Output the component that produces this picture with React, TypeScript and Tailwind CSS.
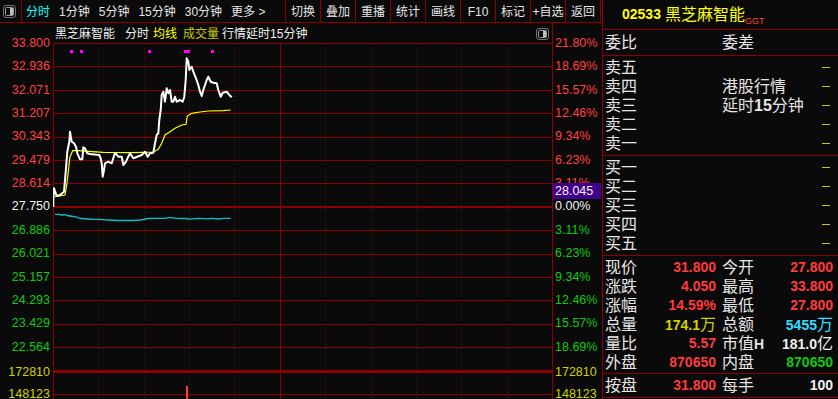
import React from "react";

const F = "font-['Liberation_Sans','Noto_Sans_CJK_SC',sans-serif]";
const LINE = "#8b0000";

function PanelIcon({ w = 13, h = 13 }: { w?: number; h?: number }) {
  return (
    <svg width={w} height={h} viewBox={`0 0 ${w} ${h}`}>
      <rect x="0.5" y="0.5" width={w - 1} height={h - 1} rx="2.5" fill="none" stroke="#707070" />
      <rect x="2.5" y="2.5" width={w - 5} height={h - 5} rx="1" fill="none" stroke="#9a9a9a" />
      <rect x={w - 6} y="3" width="3" height={h - 6} fill="#bdbdbd" />
    </svg>
  );
}

function Toolbar() {
  const tabs = ["1分钟", "5分钟", "15分钟", "30分钟", "更多 >"];
  const btns = ["切换", "叠加", "重播", "统计", "画线", "F10", "标记", "+自选", "返回"];
  return (
    <div className="h-[23px] shrink-0 border-b border-[#8b0000] flex text-[12px] leading-none">
      <div className="w-[22px] border-r border-[#8b0000] flex items-center pl-[3px]">
        <PanelIcon />
      </div>
      <div className="w-[264px] border-r border-[#8b0000] flex items-center pl-[4px] gap-[9px] pt-[2px]">
        <span className="text-[#00ffff]">分时</span>
        {tabs.map((t) => (
          <span key={t} className="text-[#e6e6e6] whitespace-pre">
            {t}
          </span>
        ))}
      </div>
      {btns.map((b) => (
        <div
          key={b}
          className="w-[35px] border-r border-[#8b0000] flex items-center justify-center pt-[2px] text-[#e6e6e6]"
        >
          {b}
        </div>
      ))}
    </div>
  );
}

const prices = [
  "33.800", "32.936", "32.071", "31.207", "30.343", "29.479", "28.614",
  "27.750", "26.886", "26.021", "25.157", "24.293", "23.429", "22.564",
];
const pcts = [
  "21.80%", "18.69%", "15.57%", "12.46%", "9.34%", "6.23%", "3.11%",
  "0.00%", "3.11%", "6.23%", "9.34%", "12.46%", "15.57%", "18.69%",
];

function axisColor(i: number) {
  if (i < 7) return "text-[#ff4040]";
  if (i === 7) return "text-[#f0f0f0]";
  return "text-[#10c810]";
}

function LeftAxis() {
  return (
    <div className="w-[53px] shrink-0 flex flex-col pt-[8.3px] text-[12.5px] leading-none overflow-hidden">
      {prices.map((p, i) => (
        <div key={i} className={`h-[23.4px] shrink-0 flex items-center justify-end pr-[3px] ${axisColor(i)}`}>
          {p}
        </div>
      ))}
      <div className="h-[22px] mt-[2px] shrink-0 flex items-center justify-end pr-[3px] text-[#d2d200]">172810</div>
      <div className="h-[22px] shrink-0 flex items-center justify-end pr-[3px] text-[#d2d200]">148123</div>
    </div>
  );
}

function RightAxis() {
  return (
    <div className="relative w-[50px] shrink-0 border-l border-[#8b0000] flex flex-col pt-[8.3px] text-[12.5px] leading-none overflow-hidden">
      {pcts.map((p, i) => (
        <div key={i} className={`h-[23.4px] shrink-0 flex items-center pl-[2px] ${axisColor(i)}`}>
          {p}
        </div>
      ))}
      <div className="h-[22px] mt-[2px] shrink-0 flex items-center pl-[2px] text-[#d2d200]">172810</div>
      <div className="h-[22px] shrink-0 flex items-center pl-[2px] text-[#d2d200]">148123</div>
      <div className="absolute left-0 top-[160px] w-[48px] h-[16px] bg-[#40008c] text-[#f4f4f4] flex items-center pl-[2px]">
        28.045
      </div>
    </div>
  );
}

function ChartHeader() {
  return (
    <div className="h-[20px] shrink-0 flex items-center text-[12px] leading-none pl-[2px] pt-[1px]">
      <span className="text-[#f0f0f0]">黑芝麻智能</span>
      <span className="text-[#f0f0f0] ml-[10px]">分时</span>
      <span className="text-[#ffff00] ml-[4px]">均线</span>
      <span className="text-[#c8c800] ml-[6px]">成交量</span>
      <span className="text-[#f0f0f0] ml-[3px]">行情延时15分钟</span>
      <span className="ml-auto mr-[3px] flex">
        <PanelIcon w={13} h={12} />
      </span>
    </div>
  );
}

const whitePts =
  "53.3,207 53.3,200 54,188.3 56.7,196 60,195 64,191.7 66,168.3 67.3,151.7 69.3,141.7 70,131.7 71.7,141.7 74,143.3 76,146.7 77.3,153.3 80,159.3 82.3,159.3 83.3,147.3 85,148.3 87.3,153.3 90,154 99.3,155 100.7,158.3 101.7,163.3 102.7,176.7 104,170 105,163.3 108.3,161.7 111.7,163.3 115,152.7 118.3,156.7 121.7,156.7 123.3,165 126,161.7 128.3,156.7 130,153.3 133.3,158.3 137.3,156.7 141.7,155 145,151.7 147.7,156.7 150,153.3 153.3,152.7 155,143.3 156.7,135 158.3,133.3 159.3,120 160.7,110 161.7,95 163.3,91.7 165,101.7 166.7,88.3 168.3,93.3 170,90 171.7,101.7 173.3,101.7 175,96.7 176.7,101.7 180,100 182.7,101.7 184.3,96.7 185.7,80 186.7,58.3 188.3,61.7 189.3,70 191.7,66.7 193.3,71.7 196,78.3 198.3,85 200,91.7 201.7,96 203.3,90 206.7,80 208.3,76.7 210.7,81.7 213.3,82.7 216.7,83.3 218.3,90 220.7,96.7 222.7,92.7 226.7,91.7 229.3,95 231.7,97.3";

const yellowPts =
  "55,196.7 65,195 66.7,185 68.3,171.7 70,156.7 72.7,150.7 78.3,150.7 103.3,152.3 133.3,152.7 153.3,152 158.3,149.3 161.7,143.3 165,135 170,131.7 175,128.3 181.7,125 186,124.3 187.3,116 191.7,113.3 200,112 208.3,111 223.3,110.7 230.7,110";

const cyanPts =
  "55,214.3 60,214.3 61,215 64,215 65,214.5 67,215.5 70,216 73,216.5 75,216.7 78,217.5 80,218.5 83,218.3 86,219 90,219 93,219.3 100,219.3 105,219.8 110,220 116.7,220.5 125,220.3 133.3,220.5 140,220 143.3,219.5 148,218.5 155,218.3 165,218.3 170,217.3 176,218.3 185,218.5 190,219.2 195,218.6 200,218.3 206,218.8 212,218.4 218,219 224,218.4 230.7,218.3";

function Plot() {
  const W = 499;
  const H = 356;
  const hLines: number[] = [];
  for (let k = 1; k <= 13; k++) if (k !== 7) hLines.push(Math.round(k * 23.4) + 0.5);
  const vLines: { x: number; solid: boolean }[] = [];
  for (let i = 1; i <= 10; i++) vLines.push({ x: Math.round(i * 45.36) + 0.5, solid: i === 5 });
  return (
    <svg width={W} height={H} className="block shrink-0">
      <line x1="0.5" y1="0" x2="0.5" y2={H} stroke={LINE} />
      <line x1="0" y1="0.5" x2={W} y2="0.5" stroke={LINE} />
      {hLines.map((y) => (
        <line key={y} x1="0" y1={y} x2={W} y2={y} stroke={LINE} />
      ))}
      <rect x="0" y="163" width={W} height="2" fill={LINE} />
      <rect x="0" y="327" width={W} height="3" fill={LINE} />
      <line x1="0" y1="351.5" x2={W} y2="351.5" stroke={LINE} />
      {vLines.map((v) => (
        <line
          key={v.x}
          x1={v.x}
          y1="1"
          x2={v.x}
          y2={H}
          stroke={LINE}
          strokeDasharray={v.solid ? undefined : "1 3"}
        />
      ))}
      <g transform="translate(-53,-43)">
        <polyline points={cyanPts} fill="none" stroke="#10c0c8" strokeWidth="1.3" />
        <polyline points={yellowPts} fill="none" stroke="#ffff00" strokeWidth="1.2" />
        <polyline points={whitePts} fill="none" stroke="#ffffff" strokeWidth="2" strokeLinejoin="round" />
        {[70, 80, 148, 211].map((x) => (
          <rect key={x} x={x} y="50" width="3" height="3" fill="#ff00ff" />
        ))}
        <rect x="184" y="50" width="6" height="3" fill="#ff00ff" />
        <rect x="186" y="386" width="2" height="13" fill="#ff3c3c" />
      </g>
    </svg>
  );
}

function Dash() {
  return <span className="w-[8px] h-px bg-[#c8c800] mr-[8px]" />;
}

function BookRow({ label, mid }: { label: string; mid?: string }) {
  return (
    <div className="h-[19px] flex items-center">
      <span className="w-[119px] pl-[2px]">{label}</span>
      <span className="flex-1">{mid}</span>
      <Dash />
    </div>
  );
}

const RED = "text-[#ff3c3c]";

function Stat({
  l1, v1, c1, l2, v2, c2,
}: {
  l1: React.ReactNode; v1: React.ReactNode; c1: string;
  l2: React.ReactNode; v2: React.ReactNode; c2: string;
}) {
  return (
    <div className="h-[19px] flex items-center pl-[2px]">
      <div className="w-[111px] flex items-center justify-between">
        <span>{l1}</span>
        <span className={`text-[14px] font-bold ${c1}`}>{v1}</span>
      </div>
      <div className="w-[111px] ml-[6px] flex items-center justify-between">
        <span>{l2}</span>
        <span className={`text-[14px] font-bold ${c2}`}>{v2}</span>
      </div>
    </div>
  );
}

function RightPanel() {
  return (
    <div className="w-[235px] h-full flex flex-col text-[16px] leading-[19px] text-[#e6e6e6]">
      <div className="h-[30px] shrink-0 border-b border-[#8b0000] flex items-center pl-[19px]">
        <span className="text-[14px] font-bold text-[#ffff00]">02533</span>
        <span className="text-[16px] text-[#ffff00] ml-[4px]">黑芝麻智能</span>
        <span className="self-end pb-[3px] text-[9px] leading-none text-[#ff4040]">GGT</span>
      </div>
      <div className="h-[26px] shrink-0 border-b border-[#8b0000] flex items-center">
        <span className="w-[119px] pl-[2px]">委比</span>
        <span>委差</span>
      </div>
      <div className="h-[100px] shrink-0 border-b border-[#8b0000] pt-[2px]">
        <BookRow label="卖五" />
        <BookRow label="卖四" mid="港股行情" />
        <BookRow label="卖三" mid={<>延时<b className="font-bold">15</b>分钟</> as unknown as string} />
        <BookRow label="卖二" />
        <BookRow label="卖一" />
      </div>
      <div className="h-[100px] shrink-0 border-b border-[#8b0000] pt-[2px]">
        <BookRow label="买一" />
        <BookRow label="买二" />
        <BookRow label="买三" />
        <BookRow label="买四" />
        <BookRow label="买五" />
      </div>
      <div className="h-[118px] shrink-0 border-b border-[#8b0000] pt-[2px]">
        <Stat l1="现价" v1="31.800" c1={RED} l2="今开" v2="27.800" c2={RED} />
        <Stat l1="涨跌" v1="4.050" c1={RED} l2="最高" v2="33.800" c2={RED} />
        <Stat l1="涨幅" v1="14.59%" c1={RED} l2="最低" v2="27.800" c2={RED} />
        <Stat
          l1="总量"
          v1={<>174.1<span className="font-normal text-[16px]">万</span></>}
          c1="text-[#d2d200]"
          l2="总额"
          v2={<>5455<span className="font-normal text-[16px]">万</span></>}
          c2="text-[#33ddff]"
        />
        <Stat
          l1="量比"
          v1="5.57"
          c1={RED}
          l2={<>市值<b className="font-bold text-[14px]">H</b></>}
          v2={<>181.0<span className="font-normal text-[16px]">亿</span></>}
          c2="text-[#f0f0f0]"
        />
        <Stat l1="外盘" v1="870650" c1={RED} l2="内盘" v2="870650" c2="text-[#10c810]" />
      </div>
      <div className="h-[24px] shrink-0 border-b border-[#8b0000] flex items-center">
        <div className="w-full">
          <Stat l1="按盘" v1="31.800" c1={RED} l2="每手" v2="100" c2="text-[#f0f0f0]" />
        </div>
      </div>
    </div>
  );
}

export default function App() {
  return (
    <div className={`w-[838px] h-[399px] bg-[#0a0a0a] flex overflow-hidden text-[#e6e6e6] ${F}`}>
      <div className="w-[603px] h-full shrink-0 flex flex-col border-r border-[#8b0000]">
        <Toolbar />
        <div className="flex flex-1 min-h-0 overflow-hidden">
          <LeftAxis />
          <div className="w-[499px] shrink-0 flex flex-col overflow-hidden">
            <ChartHeader />
            <Plot />
          </div>
          <RightAxis />
        </div>
      </div>
      <RightPanel />
    </div>
  );
}
